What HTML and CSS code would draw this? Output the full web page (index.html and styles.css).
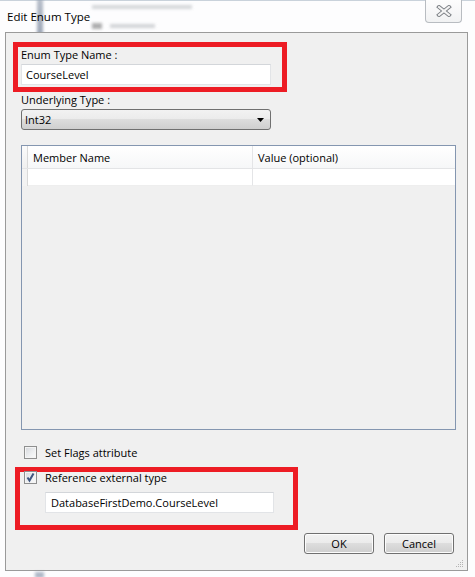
FILE: index.html
```html
<!DOCTYPE html>
<html>
<head>
<meta charset="utf-8">
<link rel="stylesheet" href="styles.css">
</head>
<body>
<div class="window">
  <div class="titlebar">
    <span class="ghost ghost-bar"></span>
    <span class="ghost ghost-text1"></span>
    <span class="ghost ghost-icon"></span>
    <span class="ghost ghost-text2"></span>
    <span class="title">Edit Enum Type</span>
    <div class="close">
      <svg width="16" height="12" viewBox="0 0 16 12">
        <line x1="3" y1="2" x2="13" y2="10" class="x-out"/>
        <line x1="13" y1="2" x2="3" y2="10" class="x-out"/>
        <line x1="3" y1="2" x2="13" y2="10" class="x-in"/>
        <line x1="13" y1="2" x2="3" y2="10" class="x-in"/>
      </svg>
    </div>
  </div>
  <div class="client">
    <div class="mark mark-name">
      <div class="label">Enum Type Name :</div>
      <div class="field field-name">CourseLevel</div>
    </div>
    <div class="label label-under">Underlying Type :</div>
    <div class="combo">
      <span>Int32</span>
      <svg width="8" height="5" viewBox="0 0 8 5"><polygon points="0,0 7,0 3.5,4" fill="#000"/></svg>
    </div>
    <div class="grid">
      <div class="grid-head">
        <div class="rowhdr"></div>
        <div class="cell c1">Member Name</div>
        <div class="cell c2">Value (optional)</div>
      </div>
      <div class="grid-row">
        <div class="rowhdr"></div>
        <div class="cell c1"></div>
        <div class="cell c2"></div>
      </div>
    </div>
    <div class="check check-flags">
      <span class="box"></span>
      <span>Set Flags attribute</span>
    </div>
    <div class="mark mark-ref">
      <div class="check check-ref">
        <span class="box">
          <svg width="11" height="11" viewBox="0 0 11 11"><path d="M2.5 5.5 L4.5 8.5 L8.5 1.5" fill="none" stroke="#3d5580" stroke-width="2"/></svg>
        </span>
        <span>Reference external type</span>
      </div>
      <div class="field field-ref">DatabaseFirstDemo.CourseLevel</div>
    </div>
    <div class="buttons">
      <div class="btn">OK</div>
      <div class="btn">Cancel</div>
    </div>
    <div class="grip">
      <svg width="9" height="9" viewBox="0 0 9 9" fill="#b4b4b4">
        <rect x="7" y="1" width="1" height="1"/>
        <rect x="5" y="3" width="1" height="1"/><rect x="7" y="3" width="1" height="1"/>
        <rect x="3" y="5" width="1" height="1"/><rect x="5" y="5" width="1" height="1"/><rect x="7" y="5" width="1" height="1"/>
        <rect x="1" y="7" width="1" height="1"/><rect x="3" y="7" width="1" height="1"/><rect x="5" y="7" width="1" height="1"/><rect x="7" y="7" width="1" height="1"/>
      </svg>
    </div>
  </div>
  <div class="bottom">
    <span class="ghost ghost-bar2"></span>
  </div>
</div>
</body>
</html>
```
FILE: styles.css
```css
* { box-sizing: border-box; }
html, body { margin: 0; padding: 0; }
body {
  background: #ffffff;
  font-family: "Open Sans", "Noto Sans", sans-serif;
  font-size: 11px;
  color: #000;
}
.window {
  width: 475px;
  height: 577px;
  position: relative;
  overflow: hidden;
  background: #fdfdfe;
}
.titlebar {
  height: 32px;
  display: flex;
  align-items: flex-start;
  position: relative;
  border-top: 1px solid #c9d2db;
}
.title {
  position: relative;
  margin: 8px 0 0 7px;
  font-size: 11.5px;
  line-height: 16px;
}
.ghost {
  position: absolute;
  filter: blur(1.5px);
}
.ghost-bar {
  left: 37px; top: -2px; width: 6px; height: 36px;
  background: linear-gradient(#8a96a8, #5c6c86);
  opacity: 0.6;
}
.ghost-text1 {
  left: 92px; top: 4px; width: 100px; height: 4px;
  background: #c5c8cc;
  opacity: 0.7;
}
.ghost-icon {
  left: 92px; top: 22px; width: 10px; height: 6px;
  background: #6e6e6e;
  opacity: 0.55;
}
.ghost-text2 {
  left: 110px; top: 23px; width: 45px; height: 4px;
  background: #c0c3c7;
  opacity: 0.7;
}
.close {
  margin: -1px 13px 0 auto;
  width: 37px;
  height: 23px;
  border: 1px solid #b8bcc1;
  border-top: none;
  border-radius: 0 0 4px 4px;
  background: linear-gradient(#fdfdfd, #f1f2f3);
  display: flex;
  align-items: center;
  justify-content: center;
}
.x-out { stroke: #7b7f84; stroke-width: 4; stroke-linecap: square; }
.x-in { stroke: #f4f4f4; stroke-width: 2; stroke-linecap: square; }

.client {
  margin-left: 5px;
  width: 463px;
  height: 539px;
  border: 1px solid #9a9a9a;
  background: #f0f0f0;
  display: flex;
  flex-direction: column;
  align-items: flex-start;
  position: relative;
}
.mark {
  border: 5px solid #ed1c24;
}
.mark-name {
  margin: 9px 0 0 7px;
  width: 274px;
  padding: 0 0 2px 3px;
}
.label {
  line-height: 15px;
  white-space: nowrap;
}
.field {
  background: #fff;
  border: 1px solid #e2e4e7;
  border-top-color: #d3d6da;
  line-height: 19px;
  height: 21px;
  padding-left: 4px;
  white-space: nowrap;
}
.field-name {
  margin-top: 2px;
  width: 250px;
}
.label-under {
  margin: 0 0 0 15px;
}
.combo {
  margin: 2px 0 0 15px;
  width: 250px;
  height: 21px;
  border: 1px solid #707070;
  border-radius: 3px;
  background: linear-gradient(#f2f2f2 0%, #ebebeb 50%, #dddddd 50%, #cfcfcf 100%);
  display: flex;
  align-items: center;
  justify-content: space-between;
  padding: 0 5px 0 3px;
  line-height: 19px;
}
.combo svg { display: block; margin-top: 1px; }

.grid {
  margin: 15px 0 0 15px;
  width: 435px;
  height: 285px;
  border: 1px solid #8496b0;
  display: flex;
  flex-direction: column;
}
.grid-head, .grid-row {
  display: flex;
}
.grid-head {
  height: 23px;
  background: linear-gradient(#ffffff, #f6f7f8);
  border-bottom: 1px solid #e3e4e6;
}
.grid-row {
  height: 17px;
}
.rowhdr {
  width: 6px;
  background: #f3f3f3;
  border-right: 1px solid #d9d9d9;
}
.grid-head .rowhdr { background: linear-gradient(#fbfbfb, #f0f0f0); }
.cell {
  line-height: 23px;
  padding-left: 5px;
  white-space: nowrap;
  border-right: 1px solid #e4e5e7;
}
.c1 { width: 225px; }
.c2 { flex: 1; border-right: none; }
.grid-row .cell { background: #fff; border-bottom: 1px solid #eeeeee; }

.check {
  display: flex;
  align-items: center;
  height: 15px;
  line-height: 15px;
  white-space: nowrap;
}
.box {
  width: 13px;
  height: 13px;
  border: 1px solid #8e8f8f;
  background: linear-gradient(135deg, #d4d6da 0%, #eef0f2 60%, #fbfbfb 100%);
  box-shadow: inset 0 0 0 1px #f4f4f4;
  margin-right: 8px;
  display: flex;
  align-items: center;
  justify-content: center;
}
.box svg { display: block; }
.check-flags {
  margin: 15px 0 0 18px;
}
.mark-ref {
  margin: 7px 0 0 9px;
  width: 283px;
  padding: 0 0 12px 4px;
}
.check-ref {
  margin-top: -2px;
}
.field-ref {
  margin: 7px 0 0 21px;
  width: 229px;
  padding-left: 5px;
}
.buttons {
  align-self: flex-end;
  margin: 3px 13px 0 0;
  display: flex;
  gap: 10px;
}
.btn {
  width: 70px;
  height: 21px;
  border: 1px solid #707070;
  border-radius: 3px;
  background: linear-gradient(#f2f2f2 0%, #ebebeb 50%, #dddddd 50%, #cfcfcf 100%);
  box-shadow: inset 0 0 0 1px #fcfcfc;
  text-align: center;
  line-height: 19px;
}
.grip {
  position: absolute;
  right: 3px;
  bottom: 2px;
}
.grip svg { display: block; }
.bottom {
  height: 6px;
  position: relative;
}
.ghost-bar2 {
  left: 35px; top: 1px; width: 9px; height: 6px;
  background: #7a8aa3;
  opacity: 0.6;
}
```
